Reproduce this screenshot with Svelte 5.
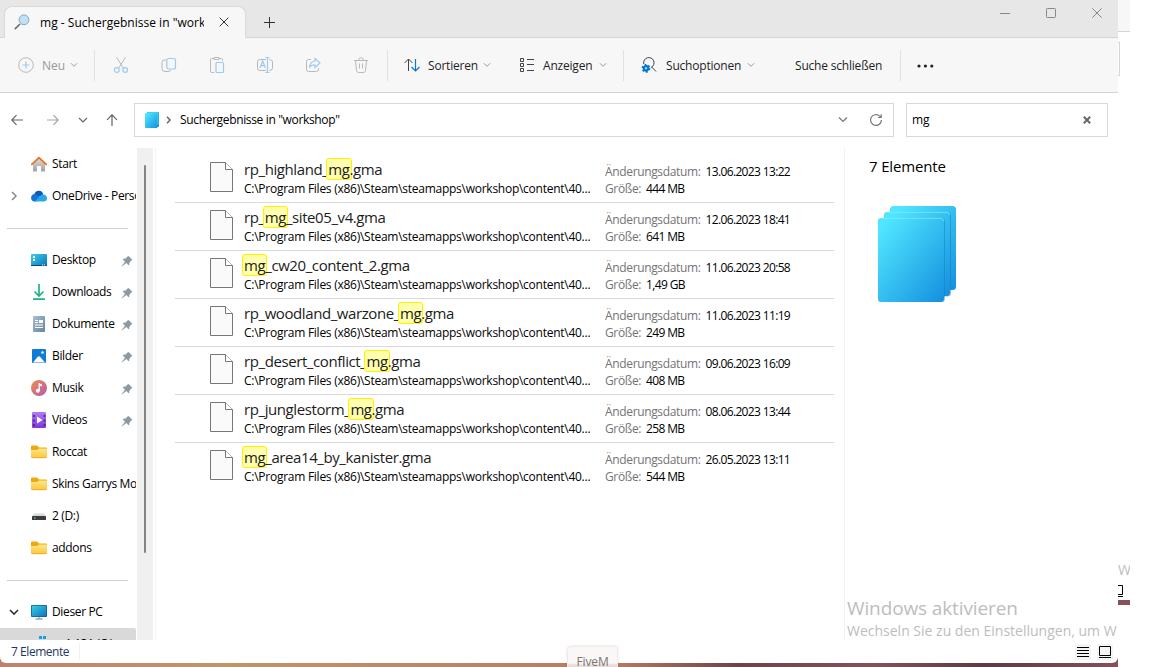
<script lang="ts">
    type SideItem = { icon: string; label: string; pinned?: boolean; arrow?: string };

    const query = 'mg';
    const path = 'C:\\Program Files (x86)\\Steam\\steamapps\\workshop\\content\\40...';

    const places: SideItem[] = [
        { icon: 'home', label: 'Start' },
        { icon: 'cloud', label: 'OneDrive - Personal', arrow: 'right' }
    ];

    const pinned: SideItem[] = [
        { icon: 'desktop', label: 'Desktop', pinned: true },
        { icon: 'download', label: 'Downloads', pinned: true },
        { icon: 'document', label: 'Dokumente', pinned: true },
        { icon: 'picture', label: 'Bilder', pinned: true },
        { icon: 'music', label: 'Musik', pinned: true },
        { icon: 'video', label: 'Videos', pinned: true },
        { icon: 'folder', label: 'Roccat' },
        { icon: 'folder', label: 'Skins Garrys Mod' },
        { icon: 'drive', label: '2 (D:)' },
        { icon: 'folder', label: 'addons' }
    ];

    const files = [
        { name: 'rp_highland_mg.gma', date: '13.06.2023 13:22', size: '444 MB' },
        { name: 'rp_mg_site05_v4.gma', date: '12.06.2023 18:41', size: '641 MB' },
        { name: 'mg_cw20_content_2.gma', date: '11.06.2023 20:58', size: '1,49 GB' },
        { name: 'rp_woodland_warzone_mg.gma', date: '11.06.2023 11:19', size: '249 MB' },
        { name: 'rp_desert_conflict_mg.gma', date: '09.06.2023 16:09', size: '408 MB' },
        { name: 'rp_junglestorm_mg.gma', date: '08.06.2023 13:44', size: '258 MB' },
        { name: 'mg_area14_by_kanister.gma', date: '26.05.2023 13:11', size: '544 MB' }
    ];

    function before(name: string) {
        return name.slice(0, name.indexOf(query));
    }
    function after(name: string) {
        return name.slice(name.indexOf(query) + query.length);
    }
</script>

{#snippet chevron()}
    <svg class="chevron" width="8" height="8" viewBox="0 0 8 8"><path d="M1 2.300 4 5.300l3-3" /></svg>
{/snippet}

{#snippet sideIcon(name: string)}
    <svg class="side-icon" width="16" height="16" viewBox="0 0 16 16">
        {#if name === 'home'}
            <path d="M2 7 8 1.6 14 7v8.6h-4V10H6v5.6H2z" fill="url(#gGrey)" />
            <path d="M.8 8.3 8 1.6l7.2 6.7" fill="none" stroke="#e8731e" stroke-width="1.8" stroke-linecap="round" stroke-linejoin="round" />
        {:else if name === 'cloud'}
            <path d="M3.2 6.2C4.2 3.4 6.2 2.4 8.2 2.7c2 .2 3.6 1.6 4.2 3.6L8 9z" fill="#0a5cb8" />
            <path d="M.1 10.3C-.2 7.8 1.8 5.8 4.2 6l6 4.5-5 3H3.4C1.5 13.5.3 12.2.1 10.3z" fill="#1277d4" />
            <path d="M3.4 13.5 10.4 7c2.600-1.300 5.400.300 5.600 3 .1 2-1.300 3.500-3.300 3.500z" fill="#28a8ea" />
        {:else if name === 'desktop'}
            <rect y="2" width="16" height="12" rx="1" fill="url(#gScreen)" />
            <path d="M2 4h2v2H2zM2 7h2v2H2z" fill="#fff" />
            <path d="M0 13h16v.5q0 .5-.5.5H.5Q0 14 0 13.500z" fill="#0c4a78" />
            <path d="M11 13h1M13 13h1" stroke="#fff" />
        {:else if name === 'download'}
            <path d="M8 0v11.500M3.500 7.500 8 12l4.500-4.500M2 15.200h12" fill="none" stroke="#1fb28a" stroke-width="1.7" />
        {:else if name === 'document'}
            <rect x="2" width="12" height="16" rx="1" fill="url(#gDoc)" />
            <path d="M4 4.500h3M4 6.500h3M4 9h8M4 11.500h8" stroke="#fff" stroke-width="1.2" />
            <rect x="8" y="4" width="4" height="3" fill="#fff" />
        {:else if name === 'picture'}
            <rect x="1" y="1" width="14" height="14" rx="1" fill="#0f7dd4" />
            <path d="M2 14.500 6.500 9q1.300-1.400 2.700 0l4.800 5.500z" fill="#fff" />
            <circle cx="11.5" cy="4.5" r="1.2" fill="#fff" />
        {:else if name === 'music'}
            <circle cx="8" cy="8" r="8" fill="url(#gMusic)" />
            <path d="M8.200 3v7.500" stroke="#fff" stroke-width="1.3" />
            <path d="M8.200 3.200 11 4.500v2L8.200 5.200z" fill="#fff" />
            <circle cx="6.8" cy="10.7" r="2" fill="#fff" />
        {:else if name === 'video'}
            <rect x="1" width="14" height="16" rx="1" fill="url(#gVideo)" />
            <path d="M6 4.500 11.500 8 6 11.500z" fill="#fff" />
            <path d="M3 3v11M13.500 3v11" stroke="#47208f" stroke-width="1.6" stroke-dasharray="2 2.5" />
        {:else if name === 'folder'}
            <path d="M0 2.500q0-1 1-1h5L8 3.500h7q1 0 1 1V8H0z" fill="#f0a80a" />
            <path d="M0 6h6l2-1.500h7q1 0 1 1V13q0 1-1 1H1q-1 0-1-1z" fill="url(#gFolder)" />
            <path d="M.5 13.700h15" stroke="#e9a31c" stroke-width=".7" />
        {:else if name === 'drive'}
            <path d="M3 5.500h10l2 3H1z" fill="#d9d9d9" />
            <rect x="1" y="8" width="14" height="4" rx=".6" fill="#3c3c3c" />
            <rect x="3" y="9.5" width="1.5" height="1.2" fill="#45e065" />
        {:else if name === 'pc'}
            <path d="M4.500 15h7M8 12.500V15" stroke="#9aa5ad" stroke-width="1.3" />
            <rect y="1" width="16" height="12" rx="1" fill="#0c5a8e" />
            <rect x=".7" y="1.7" width="14.6" height="10.6" fill="url(#gScreen)" />
        {:else if name === 'system'}
            <path d="M8 0h3v3H8zM12 0h3v3h-3zM8 4h3v3H8zM12 4h3v3h-3z" fill="#169fe6" />
            <rect x="1" y="8" width="14" height="4" fill="#3c3c3c" />
        {/if}
    </svg>
{/snippet}

{#snippet sideRow(item: SideItem)}
    <div class="side-row">
        <span class="expander">
            {#if item.arrow === 'right'}
                <svg width="8" height="10" viewBox="0 0 8 10"><path d="m2 1 4 4-4 4" fill="none" stroke="#888" stroke-width="1.5" /></svg>
            {:else if item.arrow === 'down'}
                <svg width="10" height="8" viewBox="0 0 10 8"><path d="m1 2 4 4 4-4" fill="none" stroke="#333" stroke-width="1.6" /></svg>
            {/if}
        </span>
        {@render sideIcon(item.icon)}
        <span class="side-label">{item.label}</span>
        {#if item.pinned}
            <svg class="pin" width="12" height="12" viewBox="0 0 12 12">
                <path d="m7 .5 4.500 4.500-1.300.5L8.500 7.500 8 10.500 5.300 8 .8 11.500.5 11.200 4 6.700 1.500 4l3-.5L6.500 1.800z" />
            </svg>
        {/if}
    </div>
{/snippet}

<svg class="defs" width="0" height="0">
    <defs>
        <linearGradient id="gGrey" x1="0" y1="0" x2="0" y2="1"><stop stop-color="#dcdcdc" /><stop offset="1" stop-color="#a3a3a3" /></linearGradient>
        <linearGradient id="gScreen" x1="0" y1="0" x2="1" y2="1"><stop stop-color="#35d3e0" /><stop offset="1" stop-color="#0f72c4" /></linearGradient>
        <linearGradient id="gDoc" x1="0" y1="0" x2="1" y2="1"><stop stop-color="#a9bfd4" /><stop offset="1" stop-color="#64829f" /></linearGradient>
        <linearGradient id="gMusic" x1="0" y1="0" x2="1" y2="1"><stop stop-color="#f08d4a" /><stop offset="1" stop-color="#b35ab0" /></linearGradient>
        <linearGradient id="gVideo" x1="0" y1="0" x2="0" y2="1"><stop stop-color="#b07cf0" /><stop offset="1" stop-color="#8137d8" /></linearGradient>
        <linearGradient id="gFolder" x1="0" y1="0" x2="0" y2="1"><stop stop-color="#ffe38f" /><stop offset="1" stop-color="#fcc73c" /></linearGradient>
        <linearGradient id="gStack" x1="0" y1="0" x2="1" y2="1"><stop offset=".08" stop-color="#50e6ff" /><stop offset="1" stop-color="#1490df" /></linearGradient>
    </defs>
</svg>

<div class="screen">
    <div class="window">
        <div class="titlebar">
            <div class="tab">
                <svg width="16" height="16" viewBox="0 0 16 16">
                    <path d="M.8 15.200 6 10" stroke="#68737c" stroke-width="1.7" />
                    <circle cx="10" cy="5.8" r="4.9" fill="#bfe2fa" stroke="#8ba6b8" />
                </svg>
                <span class="tab-title">mg - Suchergebnisse in "workshop"</span>
                <svg class="tab-close" width="10" height="10" viewBox="0 0 10 10"><path d="m.7.7 8.600 8.600m0-8.600L.7 9.300" /></svg>
            </div>
            <svg class="tab-new" width="11" height="11" viewBox="0 0 11 11"><path d="M0 5.500h11M5.500 0v11" /></svg>
            <div class="caption">
                <svg width="10" height="10" viewBox="0 0 10 10"><path d="M0 5.500h10" /></svg>
                <svg width="10" height="10" viewBox="0 0 10 10"><rect x=".5" y=".5" width="9" height="9" rx=".8" /></svg>
                <svg width="10" height="10" viewBox="0 0 10 10"><path d="m.3.300 9.400 9.400m0-9.400L.3 9.700" /></svg>
            </div>
        </div>

        <div class="toolbar">
            <div class="tool new">
                <svg width="16" height="16" viewBox="0 0 16 16"><circle cx="8" cy="8" r="7.3" class="g" /><path d="M8 4.500v7M4.500 8h7" class="b" /></svg>
                <span>Neu</span>
                {@render chevron()}
            </div>
            <div class="icons">
                <svg width="16" height="16" viewBox="0 0 16 16"><path d="M3.500.300 10.300 11M12.500.300 5.700 11" class="g" /><circle cx="3.8" cy="13" r="2.4" class="b" /><circle cx="12.2" cy="13" r="2.4" class="b" /></svg>
                <svg width="16" height="16" viewBox="0 0 16 16"><path d="M5 3H3.500Q1 3 1 5.500v6Q1 14.500 4 14.500h3q2 0 2.700-1.500" class="g" /><rect x="5.8" y="1.5" width="8.7" height="10.5" rx="2" class="b" /></svg>
                <svg width="16" height="16" viewBox="0 0 16 16"><path d="M5 15.500H2.500q-1 0-1-1v-12q0-1 1-1H5m5 0h2.500q1 0 1 1V4M5 .5h5v2H5z" class="g" /><rect x="7" y="5.5" width="7.5" height="10" rx="1" class="b" /></svg>
                <svg width="16" height="16" viewBox="0 0 16 16"><path d="M9 2.500H3q-2.500 0-2.500 2.500v6q0 2.500 2.500 2.500h6m3.500-11q3 0 3 2.500v6q0 2.500-3 2.500" class="g" /><path d="m3 11 2.700-7 2.700 7M4 8.700h3.500M8.500.5h4m-4 15h4m-2-15v15" class="b" /></svg>
                <svg width="16" height="16" viewBox="0 0 16 16"><path d="M6 2.500H3.500q-2 0-2 2v8q0 2 2 2h8q2 0 2-2V11" class="g" /><path d="M10 1.500 15 6l-5 4.500V8Q6.500 7.500 4.500 10.500 5 4.500 10 4z" class="b" /></svg>
                <svg width="16" height="16" viewBox="0 0 16 16"><path d="M1 3.500h14M5.500 3.500Q5.500.8 8 .8t2.500 2.700M2.500 3.500l1 10q.2 2 2 2h5q1.800 0 2-2l1-10M6.500 6.500v5M9.500 6.500v5" class="g" /></svg>
            </div>
            <div class="tool sort">
                <svg width="16" height="14" viewBox="0 0 16 14"><path d="M4.500 13V1M.5 5l4-4 4 4" class="d" /><path d="M11.500 1v12m-4-4 4 4 4-4" class="a" /></svg>
                <span>Sortieren</span>
                {@render chevron()}
            </div>
            <div class="tool view">
                <svg width="15" height="16" viewBox="0 0 15 16"><path d="M1.500 1.500h3v3h-3zM1.500 6.500h3v3h-3zM1.500 11.500h3v3h-3zM8 2.500h7M8 7.500h7M8 13.500h7" class="d" /></svg>
                <span>Anzeigen</span>
                {@render chevron()}
            </div>
            <div class="tool options">
                <svg width="16" height="16" viewBox="0 0 16 16">
                    <path d="M2.800 7A5.200 5.200 0 1 1 10 10.500M10.700 10l4.300 4.500" class="d" />
                    <circle cx="5" cy="11.3" r="2.2" fill="none" stroke="#0078d4" stroke-width="2.4" />
                    <circle cx="5" cy="11.3" r="3.7" fill="none" stroke="#0078d4" stroke-width="1.4" stroke-dasharray="1.94" />
                </svg>
                <span>Suchoptionen</span>
                {@render chevron()}
            </div>
            <div class="tool close-search"><span>Suche schließen</span></div>
            <svg class="more" width="17" height="4" viewBox="0 0 17 4"><circle cx="2" cy="2" r="1.6" /><circle cx="8.4" cy="2" r="1.6" /><circle cx="14.8" cy="2" r="1.6" /></svg>
        </div>

        <div class="navbar">
            <div class="nav-buttons">
                <svg width="12" height="12" viewBox="0 0 12 12"><path d="M12 6H.8M5.500 1.200.8 6l4.700 4.800" /></svg>
                <svg class="off" width="12" height="12" viewBox="0 0 12 12"><path d="M0 6h11.200M6.500 1.200 11.200 6l-4.700 4.800" /></svg>
                <svg width="12" height="12" viewBox="0 0 12 12"><path d="M2 4l4 4 4-4" /></svg>
                <svg width="12" height="12" viewBox="0 0 12 12"><path d="M6 12V.8M1 5.800l5-5 5 5" /></svg>
            </div>
            <div class="address">
                <svg width="14" height="16" viewBox="0 0 14 16"><rect x="2" width="12" height="15" rx="1" fill="#1490df" /><rect x="2" width="11.5" height="13" rx="1" fill="#3fd0f2" /><rect y="1" width="12.5" height="15" rx="1" fill="url(#gStack)" /></svg>
                <svg class="crumb" width="6" height="8" viewBox="0 0 6 8"><path d="m1 .8 3 3.200-3 3.200" /></svg>
                <span>Suchergebnisse in "workshop"</span>
                <svg class="drop" width="10" height="10" viewBox="0 0 10 10"><path d="m1 2.500 4 4 4-4" /></svg>
                <svg class="reload" width="12" height="12" viewBox="0 0 12 12"><path d="M11.400 6A5.400 5.400 0 1 1 9.500 1.900L11 3.200M11.200.2v3.300H8" /></svg>
            </div>
            <div class="search">
                <span>{query}</span>
                <svg width="8" height="8" viewBox="0 0 8 8"><path d="m.8.8 6.400 6.400m0-6.400L.8 7.200" /></svg>
            </div>
        </div>

        <div class="body">
            <div class="sidebar">
                {#each places as item}
                    {@render sideRow(item)}
                {/each}
                <div class="side-line"></div>
                {#each pinned as item}
                    {@render sideRow(item)}
                {/each}
                <div class="side-line"></div>
                {@render sideRow({ icon: 'pc', label: 'Dieser PC', arrow: 'down' })}
                <div class="selected">
                    {@render sideRow({ icon: 'system', label: 'w1.131 (C:)' })}
                </div>
            </div>
            <div class="scrollbar"><div class="thumb"></div></div>

            <div class="results">
                {#each files as file}
                    <div class="file">
                        <svg width="23" height="30" viewBox="0 0 23 30">
                            <path d="M.5.5h15l7 7v22H.5z" fill="#fafafa" stroke="#777" />
                            <path d="M15.500.5v7h7" fill="#fff" stroke="#777" />
                        </svg>
                        <div class="file-main">
                            <div class="file-name">{before(file.name)}<mark>{query}</mark>{after(file.name)}</div>
                            <div class="file-path">{path}</div>
                        </div>
                        <div class="file-meta">
                            <div><span class="key">Änderungsdatum:</span><span>{file.date}</span></div>
                            <div><span class="key">Größe:</span><span>{file.size}</span></div>
                        </div>
                    </div>
                {/each}
            </div>

            <div class="details">
                <h2>7 Elemente</h2>
                <svg width="80" height="97" viewBox="0 0 80 97">
                    <rect x="12" y="0" width="66" height="84" rx="3.5" fill="url(#gStack)" />
                    <rect x="6" y="6" width="67" height="84.5" rx="3.5" fill="#1277b8" opacity=".45" />
                    <rect x="6" y="6" width="66" height="84" rx="3.5" fill="url(#gStack)" />
                    <path d="M9 6.400h60q2.500 0 2.800 2.600" fill="none" stroke="#8ceefb" stroke-opacity=".6" />
                    <rect x="0" y="12" width="67" height="84" rx="3.5" fill="#1277b8" opacity=".45" />
                    <rect x="0" y="12" width="66" height="84" rx="3.5" fill="url(#gStack)" />
                    <path d="M3 12.400h60q2.500 0 2.800 2.600" fill="none" stroke="#8ceefb" stroke-opacity=".6" />
                </svg>
            </div>
        </div>

        <div class="statusbar">
            <span class="count">7 Elemente</span>
            <div class="view-switch">
                <svg width="16" height="16" viewBox="0 0 16 16"><path d="M2 3.500h12M2 6.500h12M2 9.500h12M2 12.500h12" /></svg>
                <svg width="16" height="16" viewBox="0 0 16 16"><path d="M2.500 2.500h11v9h-11zM2 13.500h12" /></svg>
            </div>
        </div>

        <div class="watermark">
            <div class="big">Windows aktivieren</div>
            <div class="small">Wechseln Sie zu den Einstellungen, um W</div>
        </div>
    </div>

    <!-- strip of the window lying behind -->
    <div class="behind">
        <div class="behind-bar"></div>
        <div class="behind-box"></div>
        <div class="behind-text">W</div>
        <svg width="12" height="17" viewBox="0 0 12 17"><path d="M0 2.500h4.500v9H0M0 13.500h5" /></svg>
        <div class="behind-edge"></div>
    </div>

    <div class="tooltip">FiveM</div>
</div>

<style>
    :global(body) {
        background: #fff;
        overflow: hidden;
    }
    .defs {
        position: absolute;
    }
    svg {
        display: block;
        flex: none;
    }
    .screen {
        position: relative;
        display: flex;
        width: 1152px;
        height: 667px;
        overflow: hidden;
        font-family: "Open Sans", "Noto Sans", sans-serif;
        font-size: 12px;
        letter-spacing: -0.35px;
        color: #000;
        white-space: nowrap;
    }
    .window {
        position: relative;
        display: flex;
        flex-direction: column;
        flex: none;
        width: 1118px;
        height: 667px;
        overflow: hidden;
        background: linear-gradient(90deg, #c2806c, #c29468 20%, #b87a62 55%, #6f4248 66%, #85525a 78%, #5d3a45 88%, #85525a);
    }

    /* title bar */
    .titlebar {
        display: flex;
        box-sizing: border-box;
        height: 38px;
        background: #e7e7e7;
        border-bottom: 1px solid #d5d5d5;
    }
    .tab {
        display: flex;
        align-items: center;
        box-sizing: border-box;
        width: 242px;
        height: 32px;
        margin: 6px 0 0 4px;
        padding: 0 16px 1px 9px;
        background: #f7f7f7;
        border: 1px solid #dadada;
        border-bottom: 0;
        border-radius: 8px 8px 0 0;
    }
    .tab-title {
        width: 164px;
        margin: 1px 0 0 10px;
        overflow: hidden;
        letter-spacing: 0.02px;
    }
    .tab-close, .tab-new {
        fill: none;
        stroke: #333;
        stroke-width: 1;
    }
    .tab-close {
        margin: -1px 0 0 15px;
    }
    .tab-new {
        margin: 17px 0 0 18px;
    }
    .caption {
        display: flex;
        gap: 36px;
        margin: 8px 16px 0 auto;
    }
    .caption svg {
        fill: none;
        stroke: #888;
    }

    /* toolbar */
    .toolbar {
        display: flex;
        align-items: center;
        box-sizing: border-box;
        height: 55px;
        background: #f7f7f7;
        border-bottom: 1px solid #d5d5d5;
        letter-spacing: -0.2px;
        color: #1f1f1f;
    }
    .toolbar svg {
        fill: none;
    }
    .g { stroke: #b9b9b9; }
    .b { stroke: #9ccbee; stroke-width: 1.2; }
    .d { stroke: #444; }
    .a { stroke: #0f78cc; stroke-width: 1.2; }
    .chevron {
        stroke: #999;
    }
    .tool {
        display: flex;
        align-items: center;
        box-sizing: border-box;
        height: 31px;
    }
    .tool span {
        padding-top: 1px;
    }
    .new {
        width: 95px;
        padding-left: 18px;
        border-right: 1px solid #e1e1e1;
        color: #999;
    }
    .new span {
        width: 28px;
        margin-left: 8px;
        letter-spacing: 0;
    }
    .icons {
        display: flex;
        align-items: center;
        gap: 32px;
        box-sizing: border-box;
        width: 293px;
        height: 31px;
        padding-left: 18px;
        border-right: 1px solid #e1e1e1;
    }
    .sort {
        width: 131px;
        padding-left: 16px;
    }
    .sort span {
        width: 55px;
        margin-left: 8px;
    }
    .view {
        width: 105px;
        border-right: 1px solid #e1e1e1;
    }
    .view span {
        width: 56px;
        margin-left: 9px;
    }
    .options {
        width: 171px;
        padding-left: 17px;
    }
    .options span {
        width: 81px;
        margin-left: 9px;
    }
    .close-search {
        width: 106px;
        border-right: 1px solid #e1e1e1;
    }
    .toolbar .more {
        margin: 1px 0 0 16px;
        fill: #222;
    }

    /* navigation and address */
    .navbar {
        display: flex;
        box-sizing: border-box;
        height: 55px;
        padding-top: 10px;
        background: #fff;
    }
    .navbar svg {
        fill: none;
        stroke: #666;
        stroke-width: 1.2;
    }
    .nav-buttons {
        display: flex;
        gap: 24px;
        align-items: center;
        width: 123px;
        height: 34px;
        padding-left: 11px;
    }
    .nav-buttons .off {
        margin-right: -6px;
        stroke: #a5a5a5;
    }
    .nav-buttons svg:nth-child(3) {
        margin-right: -7px;
    }
    .address, .search {
        display: flex;
        align-items: center;
        box-sizing: border-box;
        height: 34px;
        border: 1px solid #d9d9d9;
    }
    .address span, .search span {
        margin-top: -1px;
    }
    .address {
        width: 760px;
        padding-left: 10px;
    }
    .address svg:first-child {
        stroke: none;
    }
    .address .crumb {
        margin: 0 8px 0 7px;
        stroke-width: 1.5;
    }
    .address .drop {
        margin-left: auto;
        stroke: #777;
    }
    .address .reload {
        margin: -1px 11px 0 22px;
        stroke: #777;
    }
    .search {
        width: 202px;
        margin-left: 12px;
        padding: 0 16px 0 5px;
        justify-content: space-between;
    }
    .search span {
        letter-spacing: 0;
    }
    .search svg {
        stroke-width: 2;
    }

    /* body */
    .body {
        display: flex;
        height: 492px;
        background: #fff;
        overflow: hidden;
    }
    .sidebar {
        width: 136px;
        height: 492px;
        overflow: hidden;
    }
    .side-row {
        display: flex;
        align-items: center;
        height: 32px;
        width: 136px;
        overflow: hidden;
    }
    .expander {
        display: flex;
        justify-content: center;
        flex: none;
        width: 27px;
    }
    .side-icon {
        margin-left: 4px;
    }
    .side-label {
        margin: -2px 0 0 5px;
    }
    .pin {
        margin: 1px 3px 0 auto;
        fill: #8d99a2;
    }
    .side-line {
        height: 1px;
        margin: 16px 8px 15px 7px;
        background: #cfcfcf;
    }
    .selected {
        height: 32px;
        background: #d9d9d9;
        border-radius: 0 2px 0 0;
    }
    .selected .side-label {
        margin-left: 9px;
    }
    .scrollbar {
        width: 16px;
        margin: 0 2px 0 1px;
        background: #f0f0f0;
    }
    .thumb {
        width: 2px;
        height: 388px;
        margin: 17px 0 0 7px;
        background: #858585;
        border-radius: 1px;
    }
    .results {
        box-sizing: border-box;
        width: 689px;
        padding: 7px 10px 0 19px;
        border-left: 1px solid #f2f2f2;
    }
    .file {
        display: flex;
        box-sizing: border-box;
        height: 48px;
        padding: 7px 0 0 35px;
        border-bottom: 1px solid #d9d9d9;
    }
    .file:last-child {
        border-bottom: 0;
    }
    .file-main {
        width: 361px;
        margin: -1px 0 0 11px;
    }
    .file-name {
        height: 19px;
        line-height: 17px;
        font-size: 15px;
        letter-spacing: -0.41px;
        color: #1c1c1c;
    }
    mark {
        margin: 0 -2px;
        padding: 0 1px;
        border: 1px solid #fff100;
        border-radius: 3px;
        background: #ffffae;
        color: inherit;
    }
    .file-path {
        line-height: 18px;
        letter-spacing: -0.26px;
    }
    .file-meta {
        line-height: 17px;
        margin-top: 1px;
        letter-spacing: -0.65px;
    }
    .key {
        margin-right: 5px;
        letter-spacing: -0.35px;
        color: #747474;
    }
    .details {
        box-sizing: border-box;
        flex: 1;
        padding: 7px 0 0 24px;
        border-left: 1px solid #f2f2f2;
    }
    .details h2 {
        margin: 0;
        line-height: 22px;
        font-size: 15px;
        font-weight: 400;
        letter-spacing: -0.15px;
    }
    .details svg {
        margin: 29px 0 0 9px;
    }

    .statusbar {
        display: flex;
        align-items: center;
        justify-content: space-between;
        box-sizing: border-box;
        height: 23px;
        padding: 0 5px 0 11px;
        background: #fff;
        border-radius: 0 0 6px 6px;
        color: #1f3864;
    }
    .count {
        width: 68px;
        border-right: 1px solid #f0f0f0;
        letter-spacing: -0.45px;
    }
    .view-switch {
        display: flex;
        gap: 6px;
    }
    .view-switch svg {
        fill: none;
        stroke: #000;
        background: #f5f5f5;
    }

    .watermark {
        position: absolute;
        left: 847px;
        top: 597px;
        color: #bdbdbd;
    }
    .big {
        line-height: 23px;
        font-size: 19px;
        letter-spacing: -0.12px;
    }
    .small {
        line-height: 22px;
        font-size: 14px;
        letter-spacing: 0;
    }

    .behind {
        flex: none;
        width: 12px;
        overflow: hidden;
    }
    .behind-bar {
        height: 31px;
        background: #f7f7f7;
        border-bottom: 1px solid #d5d5d5;
    }
    .behind-box {
        width: 1px;
        height: 32px;
        margin-top: 10px;
        border: 1px solid #d5d5d5;
        border-left: 0;
    }
    .behind-text {
        margin-top: 483px;
        line-height: 22px;
        font-size: 14px;
        letter-spacing: 0;
        color: #bdbdbd;
    }
    .behind svg {
        margin-top: 2px;
        fill: none;
        stroke: #000;
    }
    .behind-edge {
        height: 5px;
        background: #85525a;
    }
    .tooltip {
        position: absolute;
        left: 567px;
        top: 646px;
        box-sizing: border-box;
        width: 51px;
        height: 30px;
        padding-top: 7px;
        border: 1px solid #efebea;
        border-radius: 4px;
        background: linear-gradient(#faf7f6 16px, #e9dcd8 18px);
        box-shadow: 0 0 3px rgba(0, 0, 0, 0.12);
        line-height: 16px;
        letter-spacing: -0.1px;
        text-align: center;
        color: #777;
    }
</style>
